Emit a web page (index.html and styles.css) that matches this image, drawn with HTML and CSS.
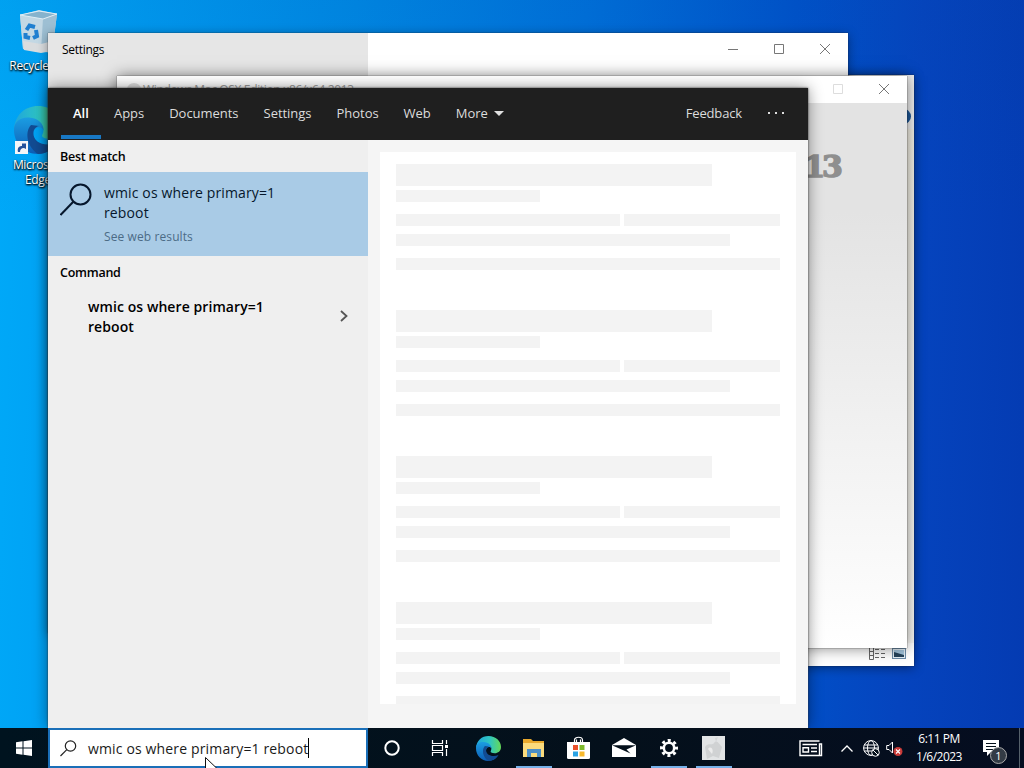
FILE: index.html
```html
<!DOCTYPE html>
<html lang="en">
<head>
  <meta charset="UTF-8">
  <title>Desktop - Search</title>
  <link rel="stylesheet" href="styles.css">
</head>
<body>
  <div class="desktop">
    <div class="shortcut recycle">
      <svg width="42" height="46" viewBox="0 0 42 46">
        <path d="M2 5L21 0L39 4L34 43L21 41L5 39Z" fill="#bfd3df"/>
        <path d="M2 5L25 9L23 42L5 39Z" fill="#c3d8e4"/>
        <path d="M25 9L39 4L34 41L23 42Z" fill="#9dbfd3"/>
        <path d="M2 5L21 1L39 4L25 9Z" fill="#86b3cd" stroke="#e0eef5"/>
        <path d="M5 31L23 34L35 31L34 41L23 43L6 40Z" fill="#d9dcde"/>
        <g fill="none" stroke="#1f7fd0" stroke-width="4">
          <path d="M8.500 20L11.500 15.500L17 17"/>
          <path d="M18 20L19 26L15 28"/>
          <path d="M12 28L7.500 27L7.500 23"/>
        </g>
      </svg>
      <span>Recycle Bin</span>
    </div>
    <div class="shortcut edge">
      <svg width="48" height="48" viewBox="0 0 24 24">
        <use href="#edge-icon"/>
      </svg>
      <svg class="arrow" width="13" height="13" viewBox="0 0 13 13">
        <rect width="13" height="13" fill="#f4f6f8"/>
        <path d="M3 11C2 7 4 5 7 5V2.500L11 2.500V8L9 7C6 7 5 9 5 11Z" fill="#24529b"/>
      </svg>
      <span>Microsoft Edge</span>
    </div>

    <div class="window explorer">
      <div class="explorer-side"><i class="help"></i></div>
      <div class="explorer-status">
        <svg width="16" height="12" viewBox="0 0 16 12">
          <g fill="none" stroke="#666"><path d="M.5 0V11.500H4.500V0M.5 3.500H4.500M.5 7.500H4.500"/><path d="M6 1.500H10M12 1.500H16M6 5.500H10M12 5.500H16M6 9.500H10M12 9.500H16"/></g>
        </svg>
        <svg width="14" height="11" viewBox="0 0 14 11">
          <rect x=".5" y=".5" width="13" height="10" fill="#e6f1f8" stroke="#6d8ca8"/>
          <rect x="2" y="2" width="10" height="7" fill="#a5c7df"/>
          <path d="M2 4L12 7V9H2Z" fill="#26445c"/>
        </svg>
      </div>
    </div>

    <div class="window settings">
      <div class="settings-side">Settings</div>
      <div class="controls">
        <svg width="102" height="12" viewBox="0 0 102 12" fill="none" stroke="#777">
          <path d="M0 6.500H10M46.500 1.500H55.500V10.500H46.500ZM92 1L102 11M102 1L92 11"/>
        </svg>
      </div>
    </div>

    <div class="window installer">
      <div class="installer-title">
        <span class="blob"></span>
        <span class="name">Windows Mac OSX Edition x86/x64 2013</span>
        <svg width="57" height="12" viewBox="0 0 57 12" fill="none">
          <path d="M.5 1.500H9.500V10.500H.5Z" stroke="#ddd"/>
          <path d="M46 1L56 11M56 1L46 11" stroke="#777"/>
        </svg>
      </div>
      <div class="installer-body"><span>2013</span></div>
    </div>

    <div class="search">
      <div class="tabs">
        <span class="tab active">All</span>
        <span class="tab">Apps</span>
        <span class="tab">Documents</span>
        <span class="tab">Settings</span>
        <span class="tab">Photos</span>
        <span class="tab">Web</span>
        <span class="tab more">More <i class="caret"></i></span>
        <span class="feedback">Feedback</span>
        <span class="dots"><i></i><i></i><i></i></span>
      </div>
      <div class="content">
        <div class="results">
          <h2>Best match</h2>
          <div class="best">
            <svg width="32" height="33" viewBox="0 0 32 33" fill="none" stroke="#06172c" stroke-width="2">
              <circle cx="20.500" cy="11.500" r="10"/>
              <path d="M13.500 18.500L.5 32"/>
            </svg>
            <div>
              <div class="query">wmic os where primary=1<br>reboot</div>
              <div class="hint">See web results</div>
            </div>
          </div>
          <h2>Command</h2>
          <div class="command">
            <div class="query">wmic os where primary=1<br>reboot</div>
            <svg width="8" height="12" viewBox="0 0 8 12" fill="none" stroke="#555" stroke-width="1.800">
              <path d="M1 1L6.500 6L1 11"/>
            </svg>
          </div>
        </div>
        <div class="preview">
          <div class="sheet">
            <div class="skeleton"><i class="head"></i><i class="sub"></i><div class="pair"><i></i><i></i></div><i class="mid"></i><i class="full"></i></div>
            <div class="skeleton"><i class="head"></i><i class="sub"></i><div class="pair"><i></i><i></i></div><i class="mid"></i><i class="full"></i></div>
            <div class="skeleton"><i class="head"></i><i class="sub"></i><div class="pair"><i></i><i></i></div><i class="mid"></i><i class="full"></i></div>
            <div class="skeleton"><i class="head"></i><i class="sub"></i><div class="pair"><i></i><i></i></div><i class="mid"></i><i class="full"></i></div>
          </div>
        </div>
      </div>
    </div>
  </div>

  <div class="taskbar">
    <div class="start">
      <svg width="16" height="16" viewBox="0 0 16 16" fill="#fff">
        <path d="M0 2.200L6.500 1.300V7.500H0ZM7.500 1.200L16 0V7.500H7.500ZM0 8.500H6.500V14.700L0 13.800ZM7.500 8.500H16V16L7.500 14.800Z"/>
      </svg>
    </div>
    <div class="searchbox">
      <svg width="17" height="17" viewBox="0 0 17 17" fill="none" stroke="#222" stroke-width="1.200">
        <circle cx="10.500" cy="6" r="5.200"/>
        <path d="M6.800 9.700L.5 16"/>
      </svg>
      <span class="typed">wmic os where primary=1 reboot</span><i class="cursor"></i>
    </div>
    <div class="apps">
      <div class="app cortana">
        <svg width="16" height="16" viewBox="0 0 16 16"><circle cx="8" cy="8" r="6.700" fill="none" stroke="#fff" stroke-width="2"/></svg>
      </div>
      <div class="app taskview">
        <svg width="18" height="16" viewBox="0 0 18 16" fill="none" stroke="#fff" stroke-width="1.200">
          <path d="M1.500 0V3.500H11.500V0M1.500 16V12.500H11.500V16M1.500 5.500H11.500V10.500H1.500ZM15.500 0V4M15.500 9V16"/>
          <rect x="14" y="5" width="3" height="3" fill="#fff" stroke="none"/>
        </svg>
      </div>
      <div class="app">
        <svg width="25" height="25" viewBox="0 0 24 24">
          <defs>
            <linearGradient id="green" x1="0" x2="1"><stop offset="0" stop-color="#1fa5dc"/><stop offset=".55" stop-color="#2fc6c2"/><stop offset="1" stop-color="#65d957"/></linearGradient>
            <linearGradient id="blue" x1="0" y1="0" x2="0" y2="1"><stop offset="0" stop-color="#1b9de2"/><stop offset="1" stop-color="#0c5cb5"/></linearGradient>
          </defs>
          <g id="edge-icon">
            <path d="M0 11.500C.5 4.500 5.500 0 12 0C19 0 24 5 24 10.500C24 14.500 21 16.500 18 16.500C15 16.500 13.500 15.500 14.200 14.300C15.800 11.500 14 8.500 10 8C6 7.500 2 8.500 0 11.500Z" fill="url(#green)"/>
            <path d="M0 12C0 8 3 5.500 7.500 5.800C12 6 15 9 14.800 12.200C13.800 9.800 10 10 9.500 14C9.300 19 15 21 20.800 19.300C18.500 22.500 15.500 24 12 24C5 24 0 18.500 0 12Z" fill="url(#blue)"/>
            <path d="M8.500 9.500C5.500 12.500 6 20 12 24C16 23.800 19 22 21.700 18.200C16 20.800 9.500 18.500 9.700 13.500C9.800 11.500 11 10.300 12.500 10Z" fill="#124b92"/>
          </g>
        </svg>
      </div>
      <div class="app open">
        <svg width="22" height="20" viewBox="0 0 22 20">
          <path d="M0 1H8L10 3H21V18H0Z" fill="#e9a92d"/>
          <path d="M0 5H21V19H0Z" fill="#fbdb7d"/>
          <path d="M4 11H18V19H14V15H8V19H4Z" fill="#4c8fc8"/>
        </svg>
      </div>
      <div class="app">
        <svg width="23" height="24" viewBox="0 0 23 24">
          <path d="M7.500 7V4C7.500 .3 15.500 .3 15.500 4V7M9.500 6V3.500M13.500 6V3.500" fill="none" stroke="#fff" stroke-width="1.200"/>
          <path d="M0 6H23V21.500Q23 23 21.500 23H1.500Q0 23 0 21.500Z" fill="#fff"/>
          <path d="M6 9H11V14H6Z" fill="#e9502b"/><path d="M12.500 9H17.500V14H12.500Z" fill="#7eba2c"/>
          <path d="M6 15.500H11V20.500H6Z" fill="#2aa3e5"/><path d="M12.500 15.500H17.500V20.500H12.500Z" fill="#f8b92c"/>
        </svg>
      </div>
      <div class="app">
        <svg width="24" height="20" viewBox="0 0 24 20">
          <path d="M0 7L12 0L24 7V19H0Z" fill="#fff"/>
          <path d="M0 7.200H24L14.500 11.500L18.500 15.500Z" fill="#04101b"/>
        </svg>
      </div>
      <div class="app open">
        <svg width="20" height="20" viewBox="0 0 20 20" fill="none" stroke="#fff">
          <circle cx="10" cy="10" r="5.200" stroke-width="2.600"/>
          <circle cx="10" cy="10" r="7.500" stroke-width="3" stroke-dasharray="3 2.890" stroke-dashoffset="1.500"/>
        </svg>
      </div>
      <div class="app open">
        <svg width="23" height="24" viewBox="0 0 23 24">
          <rect width="23" height="24" fill="#e2e4e5"/>
          <path d="M3 11C6 6 10 10 12 7C15 3 17 8 20 11L17 22L11 20L5 23Z" fill="#d0d2d3"/>
          <path d="M6 13C9 9 12 14 10 18Z" fill="#ececec"/>
          <path d="M13 2L16 1L14 6Z" fill="#d4d6d7"/>
        </svg>
      </div>
    </div>
    <div class="tray">
      <svg class="news" width="24" height="17" viewBox="0 0 24 17" fill="none" stroke="#fff" stroke-width="1.400">
        <path d="M20.500 1H1V15.500H22.500V4H20.500V15"/>
        <path d="M3.500 4.500H18M12 8H18M12 11.500H18M4 7.800H9.500V12H4Z"/>
      </svg>
      <svg class="chevron" width="12" height="7" viewBox="0 0 12 7" fill="none" stroke="#fff" stroke-width="1.300"><path d="M.5 6.500L6 1L11.500 6.500"/></svg>
      <svg class="globe" width="17" height="17" viewBox="0 0 17 17" fill="none" stroke="#fff">
        <circle cx="8" cy="8" r="7.400"/><ellipse cx="8" cy="8" rx="3.500" ry="7.400"/><path d="M1.300 5H14.700M.5 8H15.500M1.300 11H9"/>
        <circle cx="12.500" cy="12.500" r="3.800" fill="#04101b"/><path d="M10 10L15 15"/>
      </svg>
      <svg class="volume" width="17" height="17" viewBox="0 0 17 17">
        <path d="M.7 5.500H3L6.500 2V13L3 9.500H.7Z" fill="none" stroke="#fff"/>
        <circle cx="12" cy="11.500" r="4.500" fill="#c93a38"/><path d="M10 9.500L14 13.500M14 9.500L10 13.500" stroke="#fff" stroke-width="1.100"/>
      </svg>
      <div class="clock"><span>6:11 PM</span><span>1/6/2023</span></div>
      <div class="notify">
        <svg width="17" height="17" viewBox="0 0 17 17">
          <path d="M0 0H16V12H8L4 16V12H0Z" fill="#fff"/><path d="M3 3.500H13M3 6.500H13M3 9.500H10" stroke="#04101b"/>
        </svg>
        <span class="badge">1</span>
      </div>
      <i class="peek"></i>
    </div>
  </div>

  <svg class="pointer" width="14" height="19" viewBox="0 0 14 19">
    <path d="M.5 .5V16L4.500 12.500L7 18L9.500 17L7 11.500H12Z" fill="#fff" stroke="#111"/>
  </svg>
</body>
</html>
```
FILE: styles.css
```css
* {
  box-sizing: border-box;
}
body {
  margin: 0;
  width: 1024px;
  height: 768px;
  overflow: hidden;
  position: relative;
  display: flex;
  flex-direction: column;
  font-family: "Open Sans", "Noto Sans", sans-serif;
  font-size: 13px;
}
svg {
  display: block;
  flex: none;
}
i {
  display: block;
}

/* desktop */
.desktop {
  position: relative;
  height: 728px;
  overflow: hidden;
  background:
    linear-gradient(rgba(0, 70, 150, 0.08), transparent 30%),
    linear-gradient(92deg, #00a9f8 0%, #009af0 14%, #0088e4 34%, #0070da 56%, #0052ca 76%, #0544be 88%, #043bb2 100%);
}
.shortcut {
  position: absolute;
  width: 76px;
  display: flex;
  flex-direction: column;
  align-items: center;
  color: #fff;
  font-size: 12px;
  line-height: 15px;
  letter-spacing: -0.3px;
  text-align: center;
  text-shadow: 0 1px 2px #000, 1px 1px 2px #000;
}
.recycle {
  left: 1px;
  top: 10px;
}
.recycle span {
  margin-top: 2px;
  white-space: nowrap;
}
.edge {
  left: 0;
  top: 106px;
}
.edge span {
  margin-top: 3px;
}
.arrow {
  position: absolute;
  left: 15px;
  top: 35px;
}

/* windows */
.window {
  position: absolute;
  background: #fff;
  box-shadow: 0 0 1px #222, 0 2px 10px rgba(0, 0, 0, 0.4);
}
.explorer {
  left: 780px;
  top: 75px;
  width: 134px;
  height: 591px;
  display: flex;
  flex-direction: column;
  justify-content: space-between;
}
.explorer-side {
  align-self: flex-end;
  width: 7px;
  height: 568px;
  padding-top: 34px;
  overflow: hidden;
  background: linear-gradient(#eee 0, #eee 54px, #f1eee3 54px, #f8f7f3 100%);
}
.help {
  width: 15px;
  height: 15px;
  margin-left: -11px;
  border-radius: 50%;
  background: #1c5799;
}
.explorer-status {
  height: 18px;
  display: flex;
  gap: 7px;
  padding-left: 89px;
}
.settings {
  left: 48px;
  top: 33px;
  width: 800px;
  height: 600px;
  display: flex;
  justify-content: space-between;
}
.settings-side {
  width: 320px;
  padding: 8px 14px;
  background: #e6e6e6;
  font-size: 12px;
  letter-spacing: -0.3px;
}
.controls {
  padding: 10px 18px;
}
.installer {
  left: 117px;
  top: 76px;
  width: 790px;
  height: 572px;
  box-shadow: 0 0 1px #222, 0 0 14px rgba(0, 0, 0, 0.5);
}
.installer-title {
  height: 27px;
  display: flex;
  align-items: center;
  padding: 0 17px 1px 10px;
}
.blob {
  width: 14px;
  height: 12px;
  border-radius: 50%;
  background: #ddd;
}
.name {
  flex: 1;
  margin-left: 2px;
  font-size: 12px;
  letter-spacing: -0.35px;
  color: #999;
}
.installer-body {
  height: 545px;
  padding: 40px 67px;
  background: linear-gradient(#e3e3e3, #e3e3e3 20%, #fff);
  text-align: right;
  font-family: "DejaVu Serif", serif;
  font-size: 30px;
  line-height: 47px;
  font-weight: bold;
  letter-spacing: -3px;
  color: #8f8f8f;
  -webkit-text-stroke: 1.5px #8f8f8f;
}

/* search flyout */
.search {
  position: absolute;
  left: 48px;
  top: 88px;
  width: 760px;
  height: 640px;
  box-shadow: 0 0 2px #333, 0 0 14px rgba(0, 0, 0, 0.45);
}
.tabs {
  height: 52px;
  display: flex;
  padding-left: 13px;
  background: #1f1f1f;
  color: #dcdcdc;
  line-height: 51px;
}
.tab {
  padding: 0 13px 0 12px;
  letter-spacing: -0.03px;
  white-space: nowrap;
}
.active {
  width: 40px;
  margin: 0 1px 1px 0;
  padding-right: 0;
  border-bottom: 4px solid #1878c4;
  font-weight: 600;
  color: #fff;
}
.more {
  display: flex;
  align-items: center;
  height: 51px;
  gap: 6px;
}
.caret {
  border: 5px solid transparent;
  border-top-color: #e0e0e0;
  border-bottom: 0;
}
.feedback {
  margin-left: auto;
  letter-spacing: -0.15px;
}
.dots {
  display: flex;
  gap: 5px;
  padding: 24px 24px 0 26px;
}
.dots i {
  width: 2px;
  height: 2px;
  background: #ddd;
}
.content {
  height: 588px;
  display: flex;
}
.results {
  width: 320px;
  background: #efefef;
}
h2 {
  margin: 0;
  padding-left: 12px;
  height: 32px;
  line-height: 33px;
  font-size: 12.5px;
  font-weight: 600;
  letter-spacing: -0.25px;
}
.best {
  height: 84px;
  display: flex;
  gap: 12px;
  padding: 11px 12px;
  background: #a9cbe6;
  color: #06172c;
}
.query {
  font-size: 14px;
  line-height: 20px;
  letter-spacing: 0.13px;
}
.hint {
  margin-top: 4px;
  font-size: 12px;
  line-height: 19px;
  letter-spacing: 0.1px;
  color: #4c6b86;
}
.command {
  display: flex;
  align-items: center;
  justify-content: space-between;
  padding: 9px 20px 9px 40px;
}
.command .query {
  font-weight: 600;
  letter-spacing: 0.08px;
}
.command svg {
  margin-bottom: 2px;
}
.preview {
  flex: 1;
  padding: 12px;
  background: #f5f5f5;
}
.sheet {
  height: 552px;
  overflow: hidden;
  background: #fff;
}
.skeleton {
  height: 146px;
  padding: 12px 16px;
}
.skeleton i {
  height: 12px;
  background: #f3f3f3;
}
.skeleton .head {
  width: 316px;
  height: 22px;
}
.skeleton .sub {
  width: 144px;
  margin-top: 4px;
}
.pair {
  display: grid;
  grid-template-columns: 224px 156px;
  gap: 4px;
  margin-top: 12px;
}
.skeleton .mid {
  width: 334px;
  margin-top: 8px;
}
.skeleton .full {
  margin-top: 12px;
}

/* taskbar */
.taskbar {
  height: 40px;
  display: flex;
  background: linear-gradient(90deg, #00131f, #04101b 60%, #050d20);
  color: #fff;
}
.start {
  width: 48px;
  display: flex;
  align-items: center;
  justify-content: center;
}
.searchbox {
  width: 320px;
  display: flex;
  align-items: center;
  padding-left: 10px;
  border: 2px solid #1a6fb8;
  background: #fff;
  color: #1a1a1a;
}
.typed {
  margin-left: 11px;
  font-size: 14px;
  letter-spacing: 0.15px;
  white-space: nowrap;
}
.cursor {
  width: 1px;
  height: 20px;
  background: #000;
}
.apps {
  display: flex;
}
.app {
  width: 45px;
  display: flex;
  align-items: center;
  justify-content: center;
}
.cortana {
  width: 48px;
}
.taskview {
  width: 47px;
  margin-right: 3px;
}
.open {
  background: linear-gradient(#76b0e8, #76b0e8) 5px 38px / 36px 2px no-repeat;
}
.tray {
  margin-left: auto;
  display: flex;
  align-items: center;
}
.news {
  margin-right: 18px;
}
.globe {
  margin-left: 10px;
}
.volume {
  margin-left: 6px;
}
.clock {
  width: 72px;
  display: flex;
  flex-direction: column;
  align-items: center;
  font-size: 12px;
  line-height: 18px;
  letter-spacing: -0.5px;
}
.notify {
  position: relative;
  margin-left: 8px;
}
.badge {
  position: absolute;
  left: 7px;
  top: 7px;
  width: 17px;
  height: 17px;
  border: 1px solid #aaa;
  border-radius: 50%;
  background: #333b45;
  font-size: 11px;
  line-height: 15px;
  text-align: center;
}
.peek {
  width: 1px;
  height: 40px;
  margin: 0 4px 0 19px;
  background: #56616b;
}
.pointer {
  position: absolute;
  left: 205px;
  top: 757px;
}
```
